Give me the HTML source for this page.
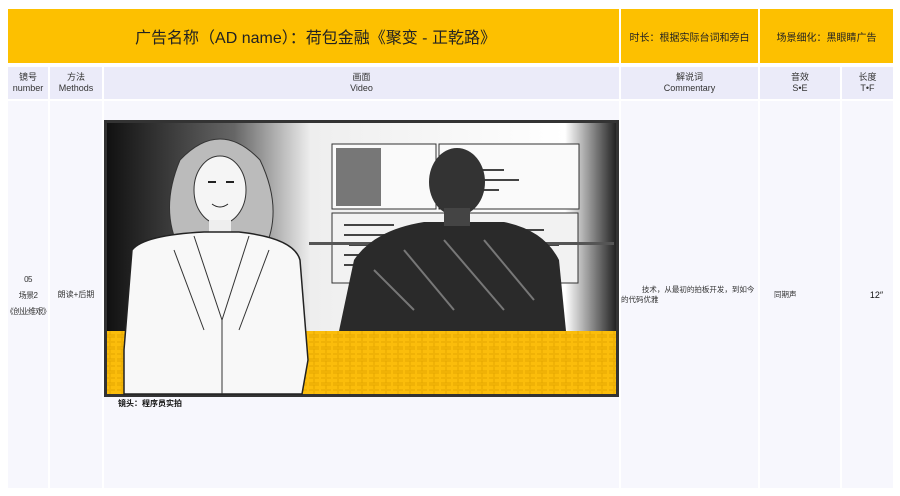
<!DOCTYPE html>
<html><head><meta charset="utf-8"><style>
*{margin:0;padding:0;box-sizing:border-box}
body{width:900px;height:496px;background:#fff;font-family:"Liberation Sans","Noto Sans CJK SC",sans-serif;position:relative;overflow:hidden}
.c{position:absolute;display:flex;align-items:center;justify-content:center;text-align:center;color:#333}
.y{background:#fdc000;color:#222}
.h{background:#ebebf9;font-size:9px;line-height:11px}
.b{background:#f7f7fd;font-size:8px}
</style></head><body>
<div class="c y" style="left:8px;top:9px;width:611px;height:54px;font-size:16px;padding-left:4px">广告名称（AD name）：荷包金融《聚变 - 正乾路》</div>
<div class="c y" style="left:621px;top:9px;width:137px;height:54px;font-size:10px">时长：根据实际台词和旁白</div>
<div class="c y" style="left:760px;top:9px;width:133px;height:54px;font-size:10px">场景细化：黑眼睛广告</div>

<div class="c h" style="left:8px;top:67px;width:40px;height:32px">镜号<br>number</div>
<div class="c h" style="left:50px;top:67px;width:52px;height:32px">方法<br>Methods</div>
<div class="c h" style="left:104px;top:67px;width:515px;height:32px">画面<br>Video</div>
<div class="c h" style="left:621px;top:67px;width:137px;height:32px">解说词<br>Commentary</div>
<div class="c h" style="left:760px;top:67px;width:80px;height:32px">音效<br>S•E</div>
<div class="c h" style="left:842px;top:67px;width:51px;height:32px">长度<br>T•F</div>

<div class="c b" style="left:8px;top:101px;width:40px;height:387px"></div>
<div class="c" style="left:6px;top:101px;width:44px;height:387px;line-height:16px;white-space:nowrap;font-size:8px;letter-spacing:-0.6px;padding-top:2px">05<br>场景2<br>《创业维艰》</div>
<div class="c b" style="left:50px;top:101px;width:52px;height:387px">朗读+后期</div>
<div class="c b" style="left:104px;top:101px;width:515px;height:387px"></div>
<div class="c b" style="left:621px;top:101px;width:137px;height:387px;text-align:left;justify-content:flex-start;line-height:10px;font-size:7.5px"><span>&nbsp;&nbsp;&nbsp;&nbsp;&nbsp;&nbsp;&nbsp;&nbsp;&nbsp;&nbsp;技术，从最初的拍板开发，到如今的代码优雅</span></div>
<div class="c b" style="left:760px;top:101px;width:80px;height:387px;justify-content:flex-start;padding-left:14px;font-size:7.5px">同期声</div>
<div class="c b" style="left:842px;top:101px;width:51px;height:387px;font-size:9px;color:#111;padding-left:18px">12″</div>

<svg style="position:absolute;left:104px;top:120px" width="515" height="277" viewBox="0 0 515 277">
<defs>
<linearGradient id="g2" x1="0" x2="1"><stop offset="0" stop-color="#111"/><stop offset="0.25" stop-color="#666"/><stop offset="0.4" stop-color="#eee"/><stop offset="0.9" stop-color="#fff"/><stop offset="1" stop-color="#222"/></linearGradient>
<pattern id="p" width="12" height="12" patternUnits="userSpaceOnUse"><rect width="12" height="12" fill="#fbbd0b"/><path d="M1 1h10M6 1v10M1 11h10M1 6h4M7 6h4" stroke="#e4a800" stroke-width="1" fill="none"/></pattern>
</defs>
<rect width="515" height="277" fill="#333"/>
<rect x="3" y="3" width="509" height="271" fill="url(#g2)"/>
<rect x="3" y="211" width="509" height="63" fill="url(#p)"/>
<rect x="228" y="24" width="104" height="65" fill="#fafafa" stroke="#333"/>
<rect x="232" y="28" width="45" height="58" fill="#777"/>
<rect x="335" y="24" width="140" height="65" fill="#fafafa" stroke="#333"/>
<rect x="228" y="93" width="246" height="70" fill="#f2f2f2" stroke="#333"/>
<g stroke="#444" stroke-width="2"><path d="M240 105h50M240 115h70M245 125h40M240 135h60M240 145h50M390 110h50M395 125h60M390 140h45M370 50h30M370 60h45M370 70h25"/></g>
<rect x="205" y="122" width="305" height="3" fill="#555"/>
<path d="M235 211 L250 140 Q270 110 320 102 L400 102 Q440 110 455 140 L462 211 Z" fill="#2a2a2a"/>
<path d="M270 150l40 40M300 130l50 60M340 120l60 70M380 120l50 60" stroke="#777" stroke-width="2"/>
<ellipse cx="353" cy="62" rx="28" ry="34" fill="#333"/>
<rect x="340" y="88" width="26" height="18" fill="#444"/>
<path d="M76 40 Q116 -2 156 40 Q180 90 160 130 L76 130 Q55 90 76 40 Z" fill="#bbb" stroke="#333"/>
<ellipse cx="116" cy="70" rx="26" ry="34" fill="#f5f5f5" stroke="#333"/>
<path d="M104 62h8M122 62h8" stroke="#222" stroke-width="2"/>
<path d="M108 84q8 6 16 0" stroke="#222" fill="none"/>
<rect x="105" y="100" width="22" height="22" fill="#eee"/>
<path d="M28 130 Q40 115 100 112 L135 112 Q190 118 196 140 L204 240 L198 274 L20 274 L20 230 Z" fill="#f8f8f8" stroke="#222" stroke-width="1.5"/>
<path d="M90 116 L118 200 L145 116 M118 200v74 M70 130l30 80M165 130l-30 80" stroke="#333" fill="none"/>
</svg>
<div style="position:absolute;left:118px;top:398px;font-size:8px;font-weight:bold;color:#111">镜头：程序员实拍</div>
</body></html>
